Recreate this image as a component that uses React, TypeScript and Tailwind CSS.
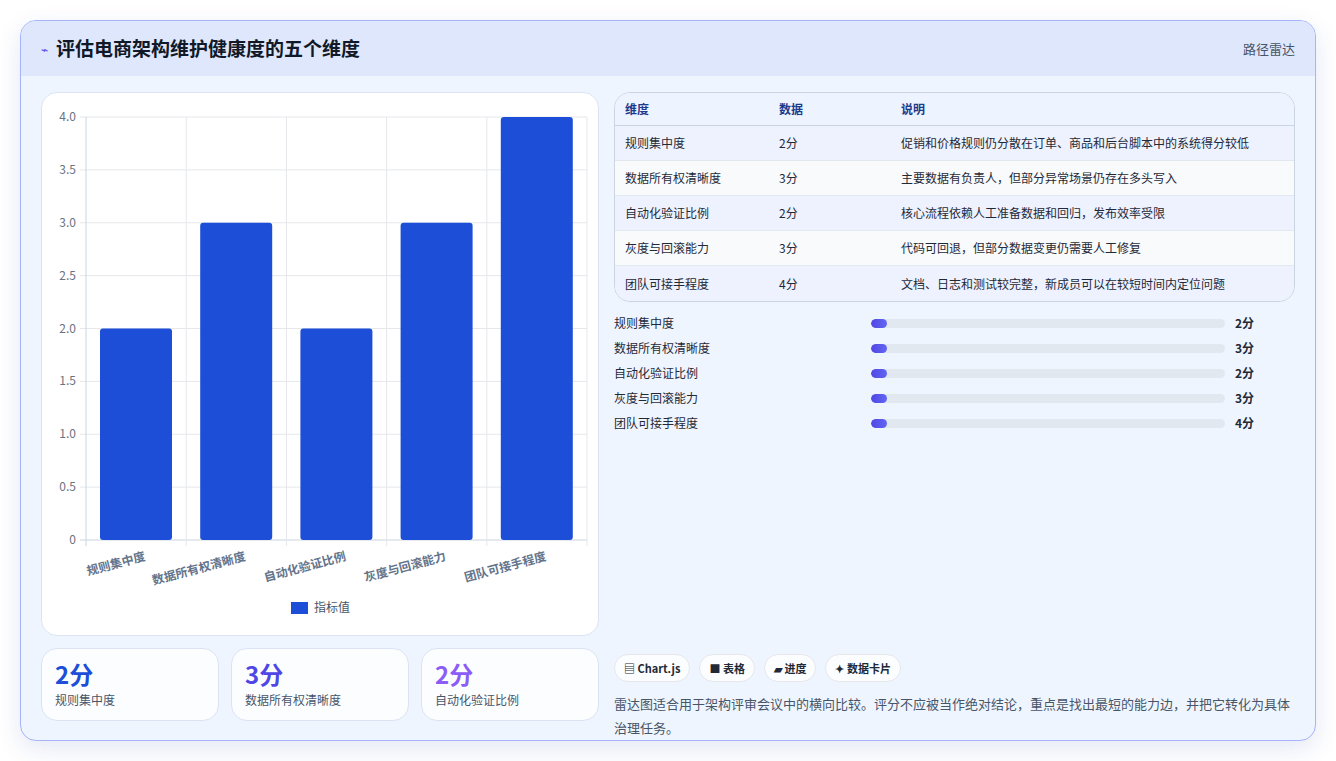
import React from "react";

const F = { fontFamily: '"Noto Sans CJK SC", "Noto Sans", sans-serif' };
const dims = ["规则集中度", "数据所有权清晰度", "自动化验证比例", "灰度与回滚能力", "团队可接手程度"];
const vals = [2, 3, 2, 3, 4];
const notes = [
  "促销和价格规则仍分散在订单、商品和后台脚本中的系统得分较低",
  "主要数据有负责人，但部分异常场景仍存在多头写入",
  "核心流程依赖人工准备数据和回归，发布效率受限",
  "代码可回退，但部分数据变更仍需要人工修复",
  "文档、日志和测试较完整，新成员可以在较短时间内定位问题",
];

function Chart() {
  const x0 = 44, x1 = 545, yTop = 24, yBot = 447;
  const h = yBot - yTop;
  const ticks = [0, 0.5, 1, 1.5, 2, 2.5, 3, 3.5, 4];
  const cw = (x1 - x0) / 5;
  return (
    <svg width="558" height="544" style={F}>
      {ticks.map((t) => {
        const y = yBot - (t / 4) * h;
        return (
          <g key={t}>
            <line x1={x0 - 6} x2={x1} y1={y} y2={y} stroke={t === 0 ? "#cbd5e1" : "#e5e7eb"} />
            <text x={x0 - 10} y={y + 4} textAnchor="end" fontSize="12" fill="#6b7280">{t === 0 ? "0" : t.toFixed(1)}</text>
          </g>
        );
      })}
      {[0, 1, 2, 3, 4, 5].map((i) => (
        <line key={i} x1={x0 + i * cw} x2={x0 + i * cw} y1={yTop} y2={yBot + 6} stroke={i === 0 ? "#cbd5e1" : "#e5e7eb"} />
      ))}
      {vals.map((v, i) => {
        const bh = (v / 4) * h;
        return <rect key={i} x={x0 + i * cw + 14} y={yBot - bh} width={72} height={bh} rx="3" fill="#1d4ed8" />;
      })}
      {dims.map((d, i) => {
        const cx = x0 + i * cw + cw / 2 + 10;
        return (
          <text key={d} x={cx} y={yBot + 20} textAnchor="end" fontSize="12" fontWeight="600" fill="#64748b" transform={`rotate(-15 ${cx} ${yBot + 20})`}>{d}</text>
        );
      })}
      <rect x="249" y="509" width="17" height="12" fill="#1d4ed8" />
      <text x="272" y="519" fontSize="12" fill="#475569">指标值</text>
    </svg>
  );
}

export default function App() {
  const statColors = ["text-[#1d4ed8]", "text-[#4f46e5]", "text-[#8b5cf6]"];
  return (
    <div className="w-[1336px] h-[761px] bg-white pt-5 px-5" style={F}>
      <div className="w-[1296px] h-[721px] rounded-2xl border border-[#a5b4fc] overflow-hidden bg-[#eff5ff] shadow-[0_8px_24px_rgba(30,64,175,0.12)] flex flex-col">
        <div className="h-[55px] shrink-0 bg-[#dfe7fd] flex items-center justify-between px-5">
          <div className="flex items-center gap-2">
            <span className="text-[#4f46e5] text-xs">⌁</span>
            <span className="text-[19px] font-bold text-[#111827]">评估电商架构维护健康度的五个维度</span>
          </div>
          <span className="text-[13px] text-[#475569]">路径雷达</span>
        </div>
        <div className="flex gap-[15px] px-5 pt-4">
          <div className="w-[558px] flex flex-col gap-3">
            <div className="h-[544px] bg-white rounded-2xl border border-[#dbe3f3]">
              <Chart />
            </div>
            <div className="flex gap-3">
              {[0, 1, 2].map((i) => (
                <div key={i} className="w-[178px] h-[73px] bg-white/80 rounded-2xl border border-[#dbe3f3] px-[13px] pt-[10px]">
                  <div className={`text-[24px] font-bold leading-[30px] ${statColors[i]}`}>{vals[i]}分</div>
                  <div className="text-[12px] text-[#475569] mt-[2px]">{dims[i]}</div>
                </div>
              ))}
            </div>
          </div>
          <div className="w-[683px] flex flex-col">
            <div className="rounded-2xl border border-[#cbd5e1] overflow-hidden text-[12px]">
              <div className="flex h-[33px] items-center bg-[#eef4ff] border-b border-[#cbd5e1] font-semibold text-[#1e3a8a]">
                <div className="w-[164px] pl-[10px]">维度</div>
                <div className="w-[122px]">数据</div>
                <div>说明</div>
              </div>
              {dims.map((d, i) => (
                <div key={d} className={`flex h-[35px] items-center text-[#1f2937] ${i % 2 === 0 ? "bg-[#eef2ff]" : "bg-[#f8fafc]"} ${i < 4 ? "border-b border-[#e2e8f0]" : ""}`}>
                  <div className="w-[164px] pl-[10px]">{d}</div>
                  <div className="w-[122px]">{vals[i]}分</div>
                  <div>{notes[i]}</div>
                </div>
              ))}
            </div>
            <div className="flex flex-col gap-[7px] mt-[12px]">
              {dims.map((d, i) => (
                <div key={d} className="flex items-center h-[18px] text-[12px]">
                  <div className="w-[257px] text-[#1f2937]">{d}</div>
                  <div className="w-[354px] h-[9px] rounded-full bg-[#e2e8f0] overflow-hidden">
                    <div className="w-[16px] h-full rounded-full bg-gradient-to-r from-[#4f46e5] to-[#6366f1]" />
                  </div>
                  <div className="ml-[10px] font-bold text-[#1f2937]">{vals[i]}分</div>
                </div>
              ))}
            </div>
            <div className="flex gap-[9px] mt-[222px]">
              {["▤ Chart.js", "■ 表格", "▰ 进度", "✦ 数据卡片"].map((c) => (
                <span key={c} className="h-[28px] px-[9px] flex items-center rounded-full bg-white/80 border border-[#e5e7eb] text-[11px] font-semibold text-[#1f2937]">{c}</span>
              ))}
            </div>
            <p className="mt-[10px] text-[13px] leading-[24px] text-[#475569]">雷达图适合用于架构评审会议中的横向比较。评分不应被当作绝对结论，重点是找出最短的能力边，并把它转化为具体治理任务。</p>
          </div>
        </div>
      </div>
    </div>
  );
}
